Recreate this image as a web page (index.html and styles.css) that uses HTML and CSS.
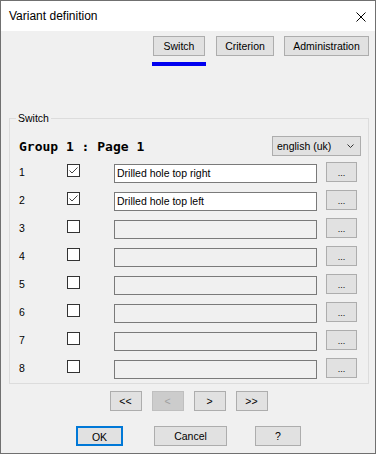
FILE: index.html
```html
<!DOCTYPE html>
<html lang="en">

<head>
    <meta charset="UTF-8">
    <title>Variant definition</title>
    <link rel="stylesheet" href="styles.css">
</head>

<body>

    <div class="window">
        <div class="titlebar">
            <span class="title">Variant definition</span>
            <svg class="close" width="10" height="10" viewBox="0 0 10 10">
                <path d="M0.5 0.5 L9.5 9.5 M9.5 0.5 L0.5 9.5" stroke="#000" stroke-width="1" fill="none" />
            </svg>
        </div>

        <div class="content">
            <div class="tabs">
                <div class="tab">
                    <button class="btn tab-switch">Switch</button>
                    <span class="tab-bar"></span>
                </div>
                <div class="tab">
                    <button class="btn tab-criterion">Criterion</button>
                </div>
                <div class="tab">
                    <button class="btn tab-admin">Administration</button>
                </div>
            </div>

            <fieldset class="group">
                <legend>Switch</legend>

                <div class="group-head">
                    <span class="page-title">Group 1 : Page 1</span>
                    <div class="select">
                        <span>english (uk)</span>
                        <svg width="7" height="4" viewBox="0 0 7 4">
                            <path d="M0.5 0.5 L3.5 3.5 L6.5 0.5" stroke="#333" stroke-width="1" fill="none" />
                        </svg>
                    </div>
                </div>

                <div class="rows">
                    <div class="row">
                        <span class="num">1</span>
                        <span class="check">
                            <svg width="11" height="11" viewBox="0 0 11 11">
                                <path d="M1.5 5.5 L4 8 L9.5 2.5" stroke="#444" stroke-width="1" fill="none" />
                            </svg>
                        </span>
                        <span class="field">Drilled hole top right</span>
                        <button class="btn more">...</button>
                    </div>
                    <div class="row">
                        <span class="num">2</span>
                        <span class="check">
                            <svg width="11" height="11" viewBox="0 0 11 11">
                                <path d="M1.5 5.5 L4 8 L9.5 2.5" stroke="#444" stroke-width="1" fill="none" />
                            </svg>
                        </span>
                        <span class="field">Drilled hole top left</span>
                        <button class="btn more">...</button>
                    </div>
                    <div class="row">
                        <span class="num">3</span>
                        <span class="check"></span>
                        <span class="field disabled"></span>
                        <button class="btn more">...</button>
                    </div>
                    <div class="row">
                        <span class="num">4</span>
                        <span class="check"></span>
                        <span class="field disabled"></span>
                        <button class="btn more">...</button>
                    </div>
                    <div class="row">
                        <span class="num">5</span>
                        <span class="check"></span>
                        <span class="field disabled"></span>
                        <button class="btn more">...</button>
                    </div>
                    <div class="row">
                        <span class="num">6</span>
                        <span class="check"></span>
                        <span class="field disabled"></span>
                        <button class="btn more">...</button>
                    </div>
                    <div class="row">
                        <span class="num">7</span>
                        <span class="check"></span>
                        <span class="field disabled"></span>
                        <button class="btn more">...</button>
                    </div>
                    <div class="row">
                        <span class="num">8</span>
                        <span class="check"></span>
                        <span class="field disabled"></span>
                        <button class="btn more">...</button>
                    </div>
                </div>
            </fieldset>

            <div class="pager">
                <button class="btn page">&lt;&lt;</button>
                <button class="btn page" disabled>&lt;</button>
                <button class="btn page">&gt;</button>
                <button class="btn page">&gt;&gt;</button>
            </div>

            <div class="actions">
                <button class="btn ok">OK</button>
                <button class="btn cancel">Cancel</button>
                <button class="btn help">?</button>
            </div>
        </div>
    </div>

</body>

</html>
```

FILE: styles.css
```css
body {
    margin: 0;
    font-family: "Liberation Sans", Arial, sans-serif;
    font-size: 10.5px;
    color: #000;
    background-color: #fff;
}

.window {
    width: 376px;
    height: 454px;
    box-sizing: border-box;
    border: 1px solid #707070;
    background-color: #f0f0f0;
    display: flex;
    flex-direction: column;
}

.titlebar {
    height: 30px;
    background-color: #fff;
    display: flex;
    align-items: center;
    justify-content: space-between;
    padding: 0 9px 0 8px;
}

.title {
    font-size: 12px;
}

.close {
    display: block;
    margin-top: 1px;
}

.content {
    flex: 1;
    padding-top: 5px;
}

/* buttons */

.btn {
    font-family: "Liberation Sans", Arial, sans-serif;
    font-size: 10.5px;
    color: #000;
    background-color: #e1e1e1;
    border: 1px solid #adadad;
    height: 20px;
    padding: 0;
    margin: 0;
    box-sizing: border-box;
    line-height: 18px;
}

.btn:disabled {
    background-color: #cccccc;
    border-color: #bfbfbf;
    color: #a0a0a0;
}

/* tabs */

.tabs {
    display: flex;
    justify-content: flex-end;
    gap: 10px;
    padding-right: 6px;
    height: 30px;
}

.tab {
    display: flex;
    flex-direction: column;
    align-items: center;
}

.tab-switch {
    width: 52px;
}

.tab-criterion {
    width: 58px;
}

.tab-admin {
    width: 85px;
}

.tab-bar {
    width: 54px;
    height: 4px;
    margin-top: 6px;
    background-color: #0000f0;
}

/* group box */

.group {
    margin: 46px 6px 0 8px;
    padding: 0 7px 5px 9px;
    border: 1px solid #dcdcdc;
    min-width: 0;
}

.group legend {
    margin-left: -3px;
    padding: 0 2px;
    line-height: 12px;
}

.group-head {
    display: flex;
    justify-content: space-between;
    align-items: center;
    margin-top: 12px;
    height: 20px;
}

.page-title {
    font-family: "DejaVu Sans Mono", "Liberation Mono", monospace;
    font-weight: bold;
    font-size: 13px;
    padding-top: 1px;
}

.select {
    width: 89px;
    height: 20px;
    box-sizing: border-box;
    background-color: #e1e1e1;
    border: 1px solid #adadad;
    display: flex;
    align-items: center;
    justify-content: space-between;
    padding: 0 6px 0 4px;
}

.select svg {
    display: block;
}

.rows {
    display: flex;
    flex-direction: column;
    gap: 8px;
    margin-top: 6px;
}

.row {
    display: flex;
    align-items: flex-start;
    height: 20px;
}

.num {
    width: 48px;
    line-height: 20px;
}

.check {
    width: 13px;
    height: 13px;
    box-sizing: border-box;
    border: 1px solid #333;
    background-color: #fff;
    margin-top: 2px;
}

.check svg {
    display: block;
}

.field {
    width: 203px;
    height: 19px;
    box-sizing: border-box;
    margin: 2px 9px 0 34px;
    border: 1px solid #7a7a7a;
    background-color: #fff;
    padding-left: 2px;
    line-height: 17px;
    white-space: nowrap;
}

.field.disabled {
    background-color: #f0f0f0;
}

.more {
    width: 31px;
    line-height: 20px;
    font-size: 9px;
}

/* bottom */

.pager {
    display: flex;
    justify-content: center;
    gap: 10px;
    margin-top: 7px;
    padding-left: 1px;
}

.page {
    width: 32px;
}

.actions {
    display: flex;
    margin-top: 15px;
    padding-left: 75px;
}

.ok {
    width: 47px;
    border: 2px solid #0078d7;
    margin-right: 31px;
}

.cancel {
    width: 73px;
    margin-right: 28px;
}

.help {
    width: 46px;
}
```
